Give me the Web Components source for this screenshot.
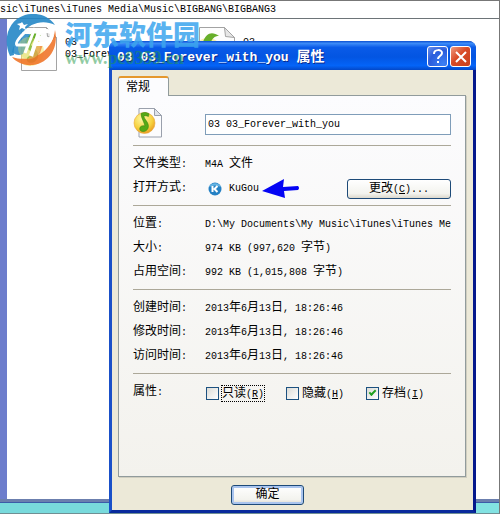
<!DOCTYPE html>
<html lang="zh-CN">
<head>
<meta charset="utf-8">
<title>03 03_Forever_with_you 属性</title>
<style>
	html, body {
		margin: 0;
		height: 100%;
	}
	body {
		font: 10px/12px "Liberation Mono", "Noto Sans CJK SC", monospace;
		color: #000;
		overflow: hidden;
	}
</style>
</head>
<body>
<explorer-window path="sic\iTunes\iTunes Media\Music\BIGBANG\BIGBANG3">
	<file-item name="03" detail="03_Forever"></file-item>
	<file-item name="03" detail=""></file-item>
	<property-dialog slot="dialog" heading="03 03_Forever_with_you 属性" tab="常规">
		<name-field value="03 03_Forever_with_you"></name-field>
		<property-group>
			<property-row label="文件类型:" value="M4A 文件"></property-row>
			<property-row label="打开方式:"><open-with app="KuGou"></open-with></property-row>
		</property-group>
		<property-group>
			<property-row label="位置:" value="D:\My Documents\My Music\iTunes\iTunes Me"></property-row>
			<property-row label="大小:" value="974 KB (997,620 字节)"></property-row>
			<property-row label="占用空间:" value="992 KB (1,015,808 字节)"></property-row>
		</property-group>
		<property-group>
			<property-row label="创建时间:" value="2013年6月13日, 18:26:46"></property-row>
			<property-row label="修改时间:" value="2013年6月13日, 18:26:46"></property-row>
			<property-row label="访问时间:" value="2013年6月13日, 18:26:46"></property-row>
		</property-group>
		<property-group class="last">
			<property-row label="属性:">
				<xp-check text="只读" key="R" focused></xp-check>
				<xp-check text="隐藏" key="H"></xp-check>
				<xp-check text="存档" key="I" checked></xp-check>
			</property-row>
		</property-group>
		<xp-button slot="footer" text="确定" primary></xp-button>
	</property-dialog>
	<site-mark slot="mark" name="河东软件园" url="www.pc0359.cn"></site-mark>
</explorer-window>

<script>
	// Chinese characters are set one step larger than the half-width Latin ones
	const zhStyle = '.zh { font: 12px/12px "Noto Sans CJK SC", sans-serif; font-weight: inherit; }';
	const mixed = text => text.replace(/[\u4e00-\u9fff]+/g, '<span class="zh">$&</span>');

	const noteIcon = `
		<svg width="30" height="30" viewBox="0 0 30 30" aria-hidden="true">
			<defs>
				<radialGradient id="ball" cx=".4" cy=".3" r=".8">
					<stop offset="0" stop-color="#fff9a8"/><stop offset=".6" stop-color="#f6d13d"/><stop offset="1" stop-color="#e58a1c"/>
				</radialGradient>
			</defs>
			<path d="M6 .5h15.500l7 7v21.500h-22.500z" fill="#fcfcfe" stroke="#9aa0ac"/>
			<path d="M21.500.5v7h7z" fill="#dfe3ea" stroke="#9aa0ac"/>
			<circle cx="11.500" cy="15" r="10.500" fill="url(#ball)" stroke="#e9a63a" stroke-width=".6"/>
			<path d="M8 5.500c3-1.500 5-1.500 8 .3l-.6 2.700c-2-1-3.400-1-4.600-.2 1 3.600 4.200 5.400 4.600 9.200.3 3.500-2.200 6-5.300 6.100-2.600 0-3.800-1.800-3.300-3.600.6-2 3-2.900 5.100-2C11.400 14 8.200 11 8 5.500z" fill="#57a916" stroke="#2f7d10" stroke-width=".5"/>
		</svg>`;

	class BaseElement extends HTMLElement {
		constructor() {
			super();
			this.attachShadow({mode: 'open'});
		}

		connectedCallback() {
			this.shadowRoot.innerHTML = this.render();
		}

		attr(name) {
			return this.getAttribute(name) || '';
		}
	}

	class ExplorerWindow extends BaseElement {
		render() {
			return `
				<style>
					:host {
						display: flex;
						flex-direction: column;
						position: relative;
						height: 100vh;
						box-sizing: border-box;
						border: 1px solid #777;
						border-left-width: 0;
						border-bottom-color: #6f8f93;
						background: #fff;
						overflow: hidden;
					}
					.address {
						height: 17px;
						line-height: 17px;
						white-space: pre;
						border-bottom: 1px solid #6d7478;
					}
					.files {
						flex: 1;
						display: grid;
						grid-template-columns: 178px 178px;
						align-content: start;
						padding: 8px 0 0 14px;
						border-left: 7px solid #6d7dcc;
					}
					.edge {
						height: 3px;
						background: #6b7fae;
						border-bottom: 1px solid #3c5ca8;
					}
					.desktop {
						height: 10px;
						background: linear-gradient(165deg, #78dadc 0 50%, #69cdd0 55%, #82e2e2 65%);
					}
				</style>
				<div class="address">${this.attr('path')}</div>
				<div class="files"><slot></slot></div>
				<div class="edge"></div>
				<div class="desktop"></div>
				<slot name="dialog"></slot>
				<slot name="mark"></slot>
			`;
		}
	}

	class FileItem extends BaseElement {
		render() {
			return `
				<style>
					:host { display: flex; gap: 8px; }
					svg { flex: none; width: 36px; height: 44px; }
					.text { padding-top: 10px; }
					p { margin: 0; white-space: nowrap; }
				</style>
				<svg viewBox="0 0 36 44" aria-hidden="true">
					<path d="M.5.5h25l10 10v33h-35z" fill="#fdfdfd" stroke="#a3a3a3"/>
					<path d="M25.500.5l1 9 9 1z" fill="#e6e6e6" stroke="#a3a3a3"/>
					<circle cx="9" cy="25" r="14" fill="#f8e66c" opacity=".6"/>
					<path d="M4 15C7 6 13 4 20 9c-5 0-6 2-10 9 3 3 8 6 7 12-1 5-8 8-11 4-1-4 3-7 7-4 1-5-8-6-9-15z" fill="#67ae2a"/>
				</svg>
				<div class="text"><p>${this.attr('name')}</p><p>${this.attr('detail')}</p></div>
			`;
		}
	}

	class SiteMark extends BaseElement {
		render() {
			return `
				<style>
					:host {
						position: absolute;
						top: 13px;
						left: 5px;
						display: flex;
						gap: 6px;
						pointer-events: none;
					}
					svg { width: 54px; height: 52px; }
					.name {
						margin-top: 6px;
						font: 900 27px/28px "Noto Sans CJK SC", sans-serif;
						color: #3ca5ee;
						opacity: .85;
					}
					.url {
						font: bold 18px/20px "Liberation Serif", serif;
						color: #239848;
						opacity: .5;
					}
				</style>
				<svg viewBox="0 0 54 52" aria-hidden="true">
					<path d="M5 42C-3 24 4 6 20 1c12-3 23 0 30 10C38 5 25 9 17 19c-6 7-9 14-8 22z" fill="#2587c7" opacity=".9"/>
					<path d="M50 16c4 18-6 33-22 35-9 1-17-3-21-8 12 4 23 1 31-5 7-6 11-13 12-22z" fill="#ef752b" opacity=".9"/>
					<path d="M7 38c1-6 6-13 12-18h6l-7 20c-4 2-8 1-11-2z" fill="#2587c7" opacity=".85"/>
					<path d="M29 30h9l-3 9c-3 4-7 6-12 7z" fill="#ed7c36" opacity=".75"/>
					<circle cx="24" cy="34" r="11" fill="#d7df74" opacity=".4"/>
					<path d="M30 14L20 39M19 19c-5 5-9 10-7 12h10" fill="none" stroke="#fff" stroke-width="3"/>
					<path d="M35 15l-9 27M33 17h9c5 0 6 3 4 7-2 5-5 6-9 6h-6" fill="none" stroke="#fff" stroke-width="4"/>
					<path d="M17 8l2 3 4-1-3 3 1 3-4-2-3 2 1-4-3-2 4-1z" fill="#fff"/>
				</svg>
				<div><div class="name">${this.attr('name')}</div><div class="url">${this.attr('url')}</div></div>
			`;
		}
	}

	class PropertyDialog extends BaseElement {
		render() {
			return `
				<style>
					:host {
						position: absolute;
						top: 40px;
						left: 109px;
						right: 23px;
						border: 3px solid #0b35b5;
						border-top: 0;
						border-left-color: #1a50c8;
						border-right-color: #04188c;
						border-bottom-color: #082a9c;
						border-radius: 8px 8px 0 0;
						box-sizing: border-box;
						background: #ece9d8;
					}
					header {
						display: flex;
						align-items: center;
						gap: 2px;
						height: 29px;
						margin: 0 -3px;
						padding: 2px 5px 0 8px;
						box-sizing: border-box;
						border-radius: 7px 7px 0 0;
						background: linear-gradient(#0a4ed0, #3d8cf8 8%, #0a5be8 22%, #0355e2 55%, #0464f8 85%, #0348c8);
						color: #fff;
					}
					h1 {
						flex: 1;
						margin: 0;
						font: bold 13px/16px "Liberation Mono", monospace;
						text-shadow: 1px 1px #0a2a8c;
						white-space: nowrap;
					}
					h1 .zh { font: bold 14px/16px "Noto Sans CJK SC", sans-serif; }
					header button {
						width: 21px;
						height: 21px;
						padding: 0;
						border: 1px solid #fff;
						border-radius: 3px;
						background: radial-gradient(circle at 80% 90%, #3c80f4, #2a5cdc 60%, #6d93ec);
					}
					header .close { background: linear-gradient(135deg, #ef9a80, #d94a26 45%, #c8401c); }
					header svg { display: block; }
					main { padding: 6px 7px 5px 6px; }
					.tab {
						display: block;
						width: 51px;
						height: 20px;
						box-sizing: border-box;
						margin: 0 0 -1px;
						padding: 0 0 3px 7px;
						position: relative;
						text-align: left;
						font: 12px/15px "Noto Sans CJK SC", sans-serif;
						border: 1px solid #919b9c;
						border-top: 2px solid #e5982e;
						border-bottom: 0;
						border-radius: 3px 3px 0 0;
						background: #fcfcfe;
						color: #000;
					}
					.panel {
						padding: 12px 14px 0;
						border: 1px solid #919b9c;
						box-shadow: 1px 1px #d0cec0;
						background: linear-gradient(#fcfcfe, #f3f2ed);
					}
					footer {
						display: flex;
						justify-content: center;
						padding: 8px 49px 0 0;
					}
				</style>
				<header>
					<h1>${mixed(this.attr('heading'))}</h1>
					<button type="button" aria-label="帮助">
						<svg width="19" height="19" viewBox="0 0 19 19"><path d="M6 7c0-5 8-5 8-1 0 3-4 3-4 6M10 14v2" fill="none" stroke="#fff" stroke-width="2"/></svg>
					</button>
					<button type="button" class="close" aria-label="关闭">
						<svg width="19" height="19" viewBox="0 0 19 19"><path d="M5 5l10 10M15 5L5 15" fill="none" stroke="#fff" stroke-width="2"/></svg>
					</button>
				</header>
				<main>
					<button type="button" class="tab">${this.attr('tab')}</button>
					<div class="panel"><slot></slot></div>
					<footer><slot name="footer"></slot></footer>
				</main>
			`;
		}
	}

	class NameField extends BaseElement {
		render() {
			return `
				<style>
					:host {
						display: flex;
						align-items: center;
						gap: 42px;
						padding-bottom: 7px;
					}
					svg { flex: none; }
					input {
						flex: 1;
						min-width: 0;
						height: 21px;
						box-sizing: border-box;
						margin: 2px 0 0;
						padding: 0 2px;
						border: 1px solid #7f9db9;
						background: #fff;
						font: inherit;
						color: #000;
					}
				</style>
				${noteIcon}
				<input type="text" aria-label="文件名" value="${this.attr('value')}">
			`;
		}
	}

	class PropertyGroup extends BaseElement {
		render() {
			return `
				<style>
					:host {
						display: block;
						padding: 5px 0 6px;
						border-top: 1px solid #aca899;
					}
					:host(.last) { padding: 5px 0 73px; }
				</style>
				<slot></slot>
			`;
		}
	}

	class PropertyRow extends BaseElement {
		render() {
			return `
				<style>
					:host {
						display: grid;
						grid-template-columns: 72px minmax(0, 1fr);
						align-items: center;
						height: 24px;
						padding-top: 4px;
						box-sizing: border-box;
						line-height: 20px;
						white-space: nowrap;
					}
					.controls {
						display: flex;
						align-items: center;
					}
					${zhStyle}
				</style>
				<span>${mixed(this.attr('label'))}</span>
				${this.hasAttribute('value')
					? `<span>${mixed(this.attr('value'))}</span>`
					: '<div class="controls"><slot></slot></div>'}
			`;
		}
	}

	class OpenWith extends BaseElement {
		render() {
			return `
				<style>
					:host {
						flex: 1;
						display: flex;
						align-items: center;
					}
					svg { flex: none; }
					.logo { margin: 0 7px 0 3px; }
					.arrow { margin-left: 3px; }
					xp-button { margin-left: auto; }
				</style>
				<svg class="logo" width="14" height="14" viewBox="0 0 14 14" aria-hidden="true">
					<circle cx="7" cy="7" r="6.500" fill="#2581c4"/>
					<path d="M1 5c2-5 10-5 12 0-4-2-8-2-12 0z" fill="#66b4e2"/>
					<path d="M4.500 4v6M9.500 4L6.500 7l3 3" fill="none" stroke="#fff" stroke-width="2"/>
				</svg>
				<span>${this.attr('app')}</span>
				<svg class="arrow" width="38" height="20" viewBox="0 0 38 20" aria-hidden="true">
					<path d="M0 12L22 0l-1 8 15-1q2 2 0 4l-14 1 1 7z" fill="#0404f4"/>
				</svg>
				<xp-button text="更改" key="C" more="..." wide></xp-button>
			`;
		}
	}

	class XpButton extends BaseElement {
		render() {
			const key = this.attr('key');
			return `
				<style>
					:host { display: block; }
					button {
						display: block;
						width: 73px;
						height: 20px;
						padding: 0;
						border: 1px solid #1d4a78;
						border-radius: 3px;
						background: linear-gradient(#fff, #f3f3ee 75%, #dcd8cc);
						font: inherit;
						line-height: 16px;
						color: #000;
					}
					:host([wide]) button { width: 104px; }
					:host([primary]) button { box-shadow: inset 0 0 0 2px #a9c4ee; }
					${zhStyle}
				</style>
				<button type="button">${mixed(this.attr('text'))}${key ? `(<u>${key}</u>)` : ''}${this.attr('more')}</button>
			`;
		}
	}

	class XpCheck extends BaseElement {
		render() {
			return `
				<style>
					:host {
						display: block;
						width: 80px;
						padding-left: 1px;
						box-sizing: border-box;
						line-height: 12px;
					}
					label {
						display: flex;
						align-items: center;
						gap: 2px;
					}
					input {
						appearance: none;
						flex: none;
						display: grid;
						width: 13px;
						height: 13px;
						margin: 0;
						border: 1px solid #1c5180;
						background: linear-gradient(135deg, #dcdcd7, #fff);
					}
					input:checked::before {
						content: "";
						width: 5px;
						height: 2px;
						margin: 2px auto auto 2px;
						border: solid #21a121;
						border-width: 0 0 2px 2px;
						transform: rotate(-45deg);
					}
					span.text { border: 1px dotted transparent; }
					:host([focused]) span.text { border-color: #000; }
					${zhStyle}
				</style>
				<label>
					<input type="checkbox" ${this.hasAttribute('checked') ? 'checked' : ''}>
					<span class="text">${mixed(this.attr('text'))}(<u>${this.attr('key')}</u>)</span>
				</label>
			`;
		}
	}

	customElements.define('explorer-window', ExplorerWindow);
	customElements.define('file-item', FileItem);
	customElements.define('site-mark', SiteMark);
	customElements.define('property-dialog', PropertyDialog);
	customElements.define('name-field', NameField);
	customElements.define('property-group', PropertyGroup);
	customElements.define('property-row', PropertyRow);
	customElements.define('open-with', OpenWith);
	customElements.define('xp-button', XpButton);
	customElements.define('xp-check', XpCheck);
</script>
</body>
</html>
